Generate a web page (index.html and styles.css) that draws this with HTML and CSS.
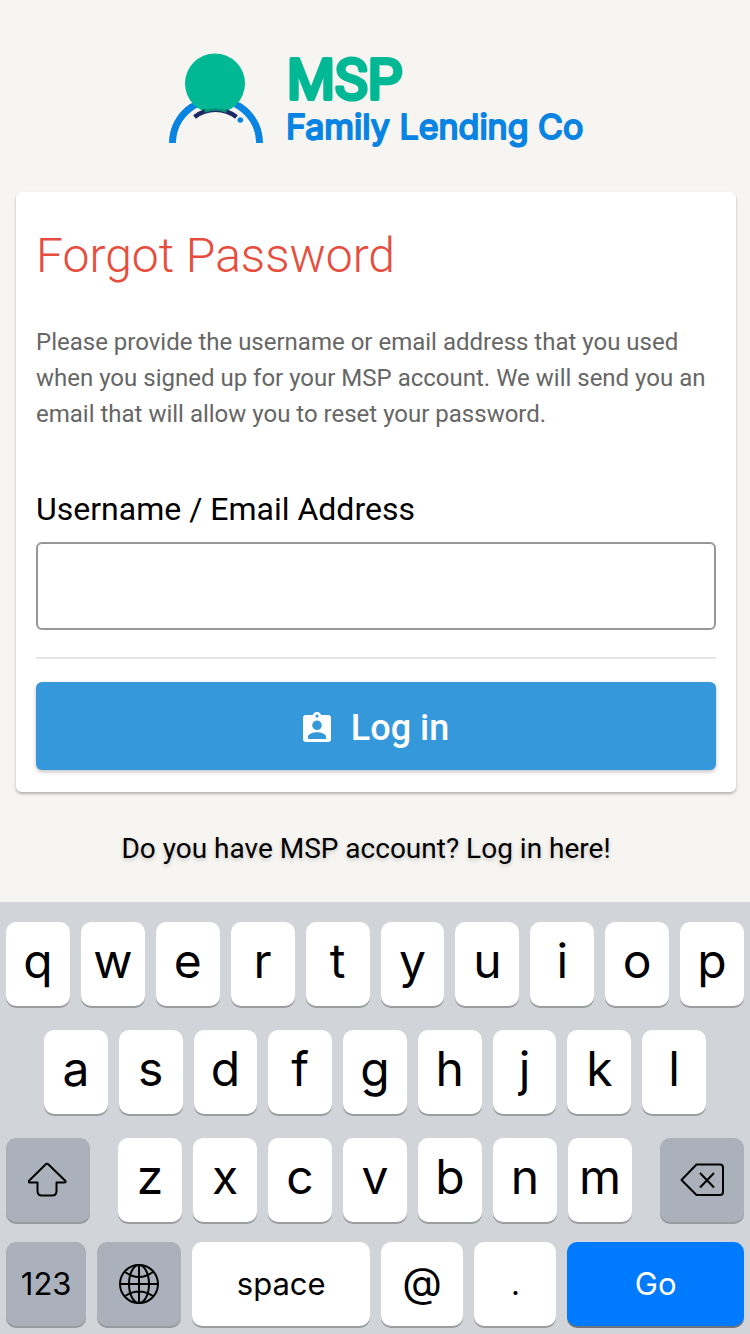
FILE: index.html
```html
<!DOCTYPE html>
<html lang="en">
<head>
<meta charset="utf-8">
<meta name="viewport" content="width=device-width, initial-scale=1">
<title>Forgot Password</title>
<link rel="stylesheet" href="styles.css">
</head>
<body class="page">
<header class="brand">
  <svg class="brand-mark" width="96" height="92" viewBox="0 0 96 92" aria-hidden="true">
    <path d="M4.500 90A43.500 43.500 0 0 1 91.500 90" fill="none" stroke="#0984e3" stroke-width="6.600"/>
    <circle cx="47" cy="30.500" r="32.500" fill="#f6f5f1"/>
    <path d="M15 50L25.500 48.500 29 52 20 60ZM79 50L68.500 48.500 65 52 74 60Z" fill="none"/>
    <path d="M4.500 90A43.500 43.500 0 0 1 91.500 90" fill="none" stroke="#0984e3" stroke-width="6.600" stroke-dasharray="49 38.600 49"/>
    <circle cx="47" cy="30.500" r="30" fill="#00b894"/>
    <path d="M26 65A34 34 0 0 1 69 65Z" fill="#f6f5f1"/>
    <path d="M26.500 64A34 34 0 0 1 68.500 64" fill="none" stroke="#1b2a63" stroke-width="4.500"/>
    <path d="M37 54H58V58.300Q47.500 55.500 37 58.300Z" fill="#00b894"/>
    <path d="M36.500 58.500Q47.500 54.500 58.500 58.500" fill="none" stroke="#078f77" stroke-width="2.600"/>
    <circle cx="72.300" cy="67" r="2.800" fill="#0984e3"/>
  </svg>
  <svg class="brand-text" width="296" height="98" viewBox="0 0 296 98" role="img" aria-label="MSP Family Lending Co">
    <text class="brand-name" x="0" y="46">MSP</text>
    <text class="brand-tagline" x="-1" y="86">Family Lending Co</text>
  </svg>
</header>
<main class="content">
  <form class="card">
    <h1 class="card-title">Forgot Password</h1>
    <p class="card-copy">Please provide the username or email address that you used when you signed up for your MSP account. We will send you an email that will allow you to reset your password.</p>
    <label class="field-label" for="username">Username / Email Address</label>
    <input class="field-input" id="username" type="text">
    <hr class="divider">
    <button class="submit" type="button">
      <svg width="28" height="32" viewBox="0 0 28 32" aria-hidden="true">
        <path fill="#fff" fill-rule="evenodd" d="M3 3H9.800A4.400 4.400 0 0 1 18.200 3H25A3 3 0 0 1 28 6V27A3 3 0 0 1 25 30H3A3 3 0 0 1 0 27V6A3 3 0 0 1 3 3ZM14 2.500A1.600 1.600 0 1 0 14 5.700A1.600 1.600 0 1 0 14 2.500ZM14 8.500A4.800 4.800 0 1 0 14 18.100A4.800 4.800 0 1 0 14 8.500ZM5 27H23V24.500C23 21.700 17 20.200 14 20.200S5 21.700 5 24.500Z"/>
      </svg>
      <span>Log in</span>
    </button>
  </form>
  <a class="login-link" href="#">Do you have MSP account? Log in here!</a>
</main>
<section class="keyboard" aria-label="Keyboard">
  <div class="key-row">
    <button class="key">q</button><button class="key">w</button><button class="key">e</button><button class="key">r</button><button class="key">t</button><button class="key">y</button><button class="key">u</button><button class="key">i</button><button class="key">o</button><button class="key">p</button>
  </div>
  <div class="key-row key-row-home">
    <button class="key">a</button><button class="key">s</button><button class="key">d</button><button class="key">f</button><button class="key">g</button><button class="key">h</button><button class="key">j</button><button class="key">k</button><button class="key">l</button>
  </div>
  <div class="key-row key-row-shift">
    <button class="key key-dark" aria-label="Shift">
      <svg width="40" height="36" viewBox="0 0 40 36" fill="none" stroke="#000" stroke-width="2" stroke-linejoin="round" aria-hidden="true"><path d="M17.500 2.500Q19 1 20.500 2.500L37.500 19Q38 20.500 36.500 20.500H28.500V29Q28.500 33.500 24 33.500H14Q9.500 33.500 9.500 29V20.500H1.500Q0 20.500 .8 19Z"/></svg>
    </button>
    <div class="key-group">
      <button class="key">z</button><button class="key">x</button><button class="key">c</button><button class="key">v</button><button class="key">b</button><button class="key">n</button><button class="key">m</button>
    </div>
    <button class="key key-dark" aria-label="Delete">
      <svg width="44" height="34" viewBox="0 0 44 34" fill="none" stroke="#000" stroke-width="2" stroke-linejoin="round" aria-hidden="true"><path d="M16.500 1.500H40Q43 1.500 43 4.500V29Q43 32 40 32H16.500L1.500 17ZM20 10L34 24.500M34 10L20 24.500"/></svg>
    </button>
  </div>
  <div class="key-row key-row-bottom">
    <button class="key key-dark key-word">123</button>
    <button class="key key-dark" aria-label="Next keyboard">
      <svg width="40" height="40" viewBox="0 0 40 40" fill="none" stroke="#000" stroke-width="2" aria-hidden="true"><circle cx="20" cy="20" r="19"/><ellipse cx="20" cy="20" rx="10" ry="19"/><path d="M20 1V39M1 20H39M6 8Q20 18 34 8M6 32Q20 23 34 32"/></svg>
    </button>
    <button class="key key-word">space</button>
    <button class="key key-symbol">@</button>
    <button class="key key-word">.</button>
    <button class="key key-go key-word">Go</button>
  </div>
</section>
</body>
</html>
```

FILE: styles.css
```css
*, *::before, *::after {
  box-sizing: border-box;
}

.page {
  margin: 0;
  min-height: 100vh;
  display: flex;
  flex-direction: column;
  background: #f6f5f1;
  color: #000;
  font-family: Roboto, "Liberation Sans", sans-serif;
}

.brand {
  display: flex;
  justify-content: center;
  gap: 23px;
  padding: 53px 0 41px;
}

.brand-text {
  overflow: visible;
  stroke-linejoin: round;
}

.brand-name {
  fill: #00b894;
  stroke: #00b894;
  stroke-width: 4px;
  font-size: 55px;
}

.brand-tagline {
  fill: #0984e3;
  stroke: #0984e3;
  stroke-width: 2px;
  font-family: Inter, "Liberation Sans", sans-serif;
  font-size: 34px;
}

.content {
  display: flex;
  flex-direction: column;
  padding: 0 14px 0 16px;
}

.card {
  display: flex;
  flex-direction: column;
  padding: 36px 20px 22px;
  border-radius: 6px;
  background: #fff;
  box-shadow: 0 2px 3px rgba(0, 0, 0, 0.28);
}

.card-title {
  margin: 0 0 40px;
  color: #e74c3c;
  font-size: 48px;
  font-weight: 300;
  line-height: 56px;
}

.card-copy {
  margin: 0 0 56px;
  color: #666;
  font-size: 24px;
  line-height: 36px;
}

.field-label {
  margin-bottom: 12px;
  font-size: 32px;
  line-height: 42px;
}

.field-input {
  width: 100%;
  height: 88px;
  padding: 0 20px;
  border: 2px solid #979797;
  border-radius: 6px;
  background: #fff;
  font: inherit;
  font-size: 32px;
}

.divider {
  width: 100%;
  height: 2px;
  margin: 27px 0 23px;
  border: 0;
  background: #e4e4e4;
}

.submit {
  display: flex;
  align-items: center;
  justify-content: center;
  gap: 20px;
  height: 88px;
  padding: 3px 0 0;
  border: 0;
  border-radius: 6px;
  background: #3498db;
  box-shadow: 0 2px 4px rgba(0, 0, 0, 0.24);
  color: #fff;
  font-family: inherit;
  font-size: 36px;
  font-weight: 500;
}

.login-link {
  align-self: center;
  margin: 37px 20px 0 0;
  color: #000;
  font-size: 28px;
  line-height: 40px;
  text-decoration: none;
  text-shadow: 0 2px 4px rgba(0, 0, 0, 0.2);
}

.keyboard {
  display: flex;
  flex-direction: column;
  gap: 24px;
  margin-top: auto;
  padding: 20px 6px 8px;
  background: #d1d4d9;
}

.key-row,
.key-group {
  display: grid;
  grid-auto-flow: column;
  grid-auto-columns: minmax(0, 1fr);
  gap: 11px;
}

.key-row-home {
  padding: 0 38px;
}

.key-row-shift {
  grid-template-columns: 84fr 514fr 84fr;
  gap: 28px;
}

.key-row-bottom {
  grid-template-columns: 80fr 84fr 177fr 82fr 82fr 176fr;
  margin-top: -4px;
}

.key {
  display: flex;
  align-items: center;
  justify-content: center;
  height: 84px;
  padding: 0 0 8px;
  border: 0;
  border-radius: 10px;
  background: #fff;
  box-shadow: 0 2px 0 #9a9ca0;
  color: #000;
  font-family: Inter, "Liberation Sans", sans-serif;
  font-size: 48px;
}

.key-dark {
  padding: 0;
  background: #abb1ba;
  box-shadow: 0 2px 0 #979a9f;
}

.key-word {
  padding: 0 0 2px;
  font-size: 31px;
}

.key-symbol {
  padding: 0 0 4px;
  font-size: 41px;
}

.key-go {
  background: #007aff;
  box-shadow: 0 2px 0 #6f7379;
  color: #fff;
}
```
